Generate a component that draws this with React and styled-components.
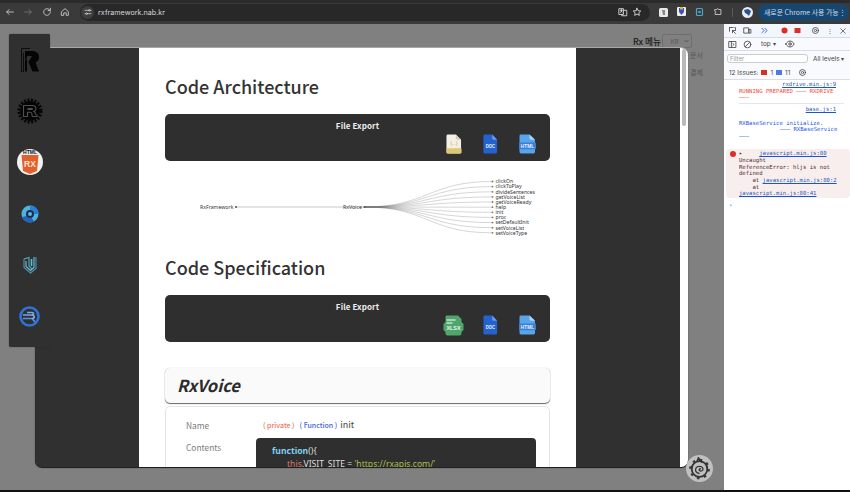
import React from "react";
import styled, { createGlobalStyle } from "styled-components";

const Global = createGlobalStyle`
  html, body { margin: 0; padding: 0; width: 850px; height: 492px; overflow: hidden; background: #000; }
  * { box-sizing: border-box; }
  body { font-family: "Noto Sans CJK KR", "Noto Sans", sans-serif; }
`;

const Shell = styled.div`
  width: 850px; height: 492px; display: flex; flex-direction: column; overflow: hidden; background: #111;
`;
const Toolbar = styled.header`
  height: 24px; flex: none; background: #3a3a3b; border-top: 3px solid #2b2b2c; display: flex; align-items: center;
  padding: 0 1px 3px 0; color: #c4c7c5;
`;
const NavGroup = styled.div`
  width: 80px; flex: none; display: flex; align-items: center; gap: 4.3px; padding-left: 3px;
`;
const NavButton = styled.span`
  width: 14px; height: 14px; display: flex; align-items: center; justify-content: center; opacity: ${p => (p.$dim ? 0.4 : 1)};
`;
const UrlBar = styled.div`
  width: 145.5px; flex: 1; height: 17px; border-radius: 9px; background: #282829; display: flex; align-items: center;
  font: 7.2px "Inter", "Liberation Sans", sans-serif; color: #d6d6d6; padding: 0 8px 0 1px; gap: 4px;
`;
const UrlTune = styled.span`
  width: 13px; height: 13px; border-radius: 50%; background: #3f3f41; display: flex; align-items: center; justify-content: center;
`;
const UrlSpacer = styled.span`flex: 1;`;
const ExtGroup = styled.div`
  flex: none; width: 108px; display: flex; align-items: center; gap: 9px; padding-left: 9px;
`;
const UpdatePill = styled.div`
  width: 91px; flex: none; height: 17px; border-radius: 9px; background: #17466f; color: #c9dff5; display: flex; align-items: center;
  justify-content: space-between; font: 6.9px "Noto Sans CJK KR", sans-serif; padding: 0 4px 0 6px; white-space: nowrap;
`;
const Body = styled.div`flex: none; height: 466px; display: flex;`;
const Page = styled.main`
  position: relative; width: 724px; flex: none; background: #808080; overflow: hidden;
`;
const PageTop = styled.div`
  position: absolute; top: 10px; left: 633px; display: flex; align-items: center; gap: 1px; font: 500 8.6px "Noto Sans CJK KR", sans-serif; color: #1a1a1a;
`;
const LangSelect = styled.div`
  width: 30px; height: 14px; border: 1px solid #6e6e6e; border-radius: 2px; display: flex; justify-content: space-between; align-items: center;
  font: 6px "Inter", sans-serif; color: #585858; padding: 0 2px 0 8px;
`;
const BehindLinks = styled.div`
  position: absolute; top: 26px; left: 690px; display: flex; flex-direction: column; gap: 7px; font: 7px/10px "Noto Sans CJK KR", sans-serif; color: #555;
`;
const SideRail = styled.nav`
  position: absolute; left: 9px; top: 10px; width: 41px; height: 313px; background: #303031; border-radius: 2px; z-index: 2;
  box-shadow: 0 0 1px #222; display: flex; flex-direction: column; align-items: center;
`;
const RailSlot = styled.div`
  height: 51.4px; flex: none; display: flex; align-items: center; justify-content: center;
`;
const Modal = styled.section`
  position: absolute; left: 35px; top: 23px; width: 653px; height: 420px; background: #303031; border-radius: 0 7px 7px 7px;
  display: flex; overflow: hidden; box-shadow: 0 1px 1px #151515; border-top: 1px solid #a8a8a8;
`;
const Gutter = styled.div`width: 104px; flex: none; background: #303031;`;
const Sheet = styled.article`
  width: 437px; flex: none; background: #fff; padding: 23px 26px 0; overflow: hidden; color: #333;
`;
const Scroll = styled.div`flex: 1; background: #fff; padding-left: 2px;`;
const ScrollThumb = styled.div`
  width: 4px; height: 77px; background: #b9b9b9; border-radius: 2px; margin-top: 1px;
`;
const Heading = styled.h1`
  margin: 0; font: 500 18px/30px "Noto Sans CJK KR", "Noto Sans", sans-serif; color: #333; height: 30px;
`;
const ExportPanel = styled.div`
  height: 47px; margin-top: 13px; background: #2f2f30; border-radius: 5px; color: #eee; padding-top: 5px;
  display: flex; flex-direction: column; align-items: center;
`;
const ExportTitle = styled.div`
  font: 700 8px/14px "Noto Sans CJK KR", sans-serif; letter-spacing: .1px;
`;
const ExportIcons = styled.div`
  align-self: flex-end; display: flex; gap: 21px; padding-right: 14px; margin-top: 1px;
`;
const XlsxIcon = styled.svg`margin-right: -2px;`;
const Tree = styled.svg`
  display: block; width: 385px; height: 70px; margin: 14px 0 7px;
`;
const TreeLabel = styled.text`
  font: 5.2px "Noto Sans", "Liberation Sans", sans-serif; fill: #333;
`;
const ClassTitle = styled.div`
  margin-top: 26px; height: 35px; background: #fafafa; border-radius: 5px; box-shadow: 0 1px 1px #666, 0 0 1px #bbb; padding-left: 12px;
  font: italic 700 16.5px/35px "Noto Sans CJK KR", sans-serif; color: #2c2c2c;
`;
const DetailCard = styled.div`
  margin-top: 3px; height: 70px; border: 1px solid #e4e4e4; border-radius: 5px 5px 0 0; padding: 11px 13px 0 20px;
  display: grid; grid-template-columns: 70px 1fr; grid-template-rows: 18px auto; row-gap: 2px;
`;
const DetailLabel = styled.div`font: 8.4px/14px "Noto Sans CJK KR", sans-serif; color: #7c7c7c; padding-top: ${p => p.$pad || 0}px;`;
const DetailValue = styled.div`
  font: 9px/14px "Noto Sans CJK KR", sans-serif; color: #444; display: flex; gap: 3px; padding-left: 7px; white-space: nowrap;
`;
const Tag = styled.span`font-size: 7px; font-weight: 500; color: ${p => p.$c}; margin-right: ${p => p.$mr || 0}px;`;
const CodeBlock = styled.pre`
  margin: 0; width: 280px; height: 60px; background: #2f2f30; border-radius: 4px; padding: 7px 16px; font: 400 8.6px/13px "Noto Sans", sans-serif; color: #ddd;
`;
const CodeIndent = styled.span`display: inline-block; width: 15px;`;
const Kw = styled.span`color: ${p => p.$c}; font-weight: ${p => p.$b || 400};`;
const CornerBadge = styled.div`
  position: absolute; left: 686px; top: 431px; width: 27px; height: 27px; border-radius: 50%; background: #c0c0c0; z-index: 3;
  display: flex; align-items: center; justify-content: center;
`;
const Strip = styled.footer`height: 2px; flex: none; background: #111;`;

const Devtools = styled.aside`
  width: 126px; flex: none; background: #fff; display: flex; flex-direction: column; font: 6.4px "Inter", "Liberation Sans", sans-serif; color: #474747;
`;
const DevTabs = styled.div`
  height: 14px; background: #f3f6fc; border-bottom: 1px solid #d5dbe8; display: flex; align-items: center; padding-left: 3.5px;
`;
const DevRow = styled.div`
  height: ${p => p.$h}px; display: flex; align-items: center; gap: ${p => p.$gap || 0}px; padding-left: ${p => p.$pad || 3.500}px; background: #f8fafd; flex: none;
  border-bottom: ${p => (p.$line ? "1px solid #d8dce6" : "0")};
`;
const DevIcon = styled.span`
  width: ${p => p.$w || 9}px; height: 10px; flex: none; display: flex; align-items: center; justify-content: center; line-height: 10px;
  margin-left: ${p => p.$ml || 0}px; color: ${p => p.$c || "inherit"};
`;
const DevLabel = styled.span`margin-left: ${p => p.$ml || 0}px; white-space: nowrap;`;
const FilterBox = styled.div`
  width: 81px; height: 9px; border: 1px solid #c8ccd3; border-radius: 3px; background: #fff; color: #999; font-size: 6px; line-height: 7px; padding-left: 2px;
`;
const Console = styled.div`
  flex: 1; background: #fff; font: 5.6px/6.7px "DejaVu Sans Mono", "Liberation Mono", monospace; color: #333; padding-top: 1px;
`;
const LogEntry = styled.div`
  margin-left: 15px; margin-right: 6px; padding-bottom: ${p => (p.$line ? 2 : 0)}px; color: ${p => p.$c || "#333"}; margin-bottom: ${p => p.$mb || 0}px;
  border-bottom: ${p => (p.$line ? "1px solid #e1e7f2" : "0")};
`;
const LogSource = styled.div`text-align: right; padding-right: 8px; color: #1a56c4; text-decoration: underline;`;
const LogIndent = styled.span`margin-left: 41px; white-space: nowrap;`;
const LogLink = styled.span`color: #1a56c4; text-decoration: underline;`;
const ErrorBox = styled.div`
  margin-left: 2px; background: #f9eeee; border-radius: 4px; padding: 1px 0 1px 13px; color: #4a2a2a; position: relative; height: 49px; white-space: pre;
`;
const ErrDot = styled.span`
  position: absolute; left: 4px; top: 2px; width: 6px; height: 6px; border-radius: 50%; background: #d93025;
`;
const Prompt = styled.div`padding: 4px 0 0 5px; color: #1a56c4; font-weight: 700;`;

const Stroke = ({ children, s = 12 }) => (
  <svg width={s} height={s} viewBox="0 0 24 24" fill="none" stroke="currentColor" strokeWidth="2.2" strokeLinecap="round" strokeLinejoin="round">{children}</svg>
);

const FileIcon = ({ body, fold, label, labelBg, w = 17, extra }) => (
  <svg width={w} height="20" viewBox="0 0 17 21" preserveAspectRatio="none">
    <path d="M2 0.5H10.5L16 6V19a1.5 1.5 0 0 1-1.5 1.5H2A1.5 1.5 0 0 1 .5 19V2A1.5 1.5 0 0 1 2 .5Z" fill={body} />
    <path d="M10.5 .5L16 6H12a1.5 1.5 0 0 1-1.5-1.5Z" fill={fold} />
    {extra}
    {labelBg && <rect x="0" y="9" width="17" height="7" rx="1" fill={labelBg} />}
    {label && <text x="8.5" y="14.6" textAnchor="middle" fontSize="4.8" fontWeight="700" fill="#e6f0ff" fontFamily="Liberation Sans, sans-serif">{label}</text>}
  </svg>
);

const leaves = [
  ["clickOn", 181.5], ["clickToPlay", 186.6], ["divideSentences", 191.8], ["getVoiceList", 196.9], ["getVoiceReady", 202], ["help", 207.2],
  ["init", 212.3], ["proc", 217.4], ["setDefaultInit", 222.6], ["setVoiceList", 227.7], ["setVoiceType", 232.8],
];

const TreeChart = () => (
  <Tree viewBox="0 0 385 70">
    <g transform="translate(-165 -175)">
      <path d="M236 207H364" stroke="#bbb" strokeWidth=".8" fill="none" />
      {leaves.map(([n, y]) => (
        <path key={n} d={`M364 207C428 207 428 ${y} 492 ${y}`} stroke="#555" strokeOpacity=".3" strokeWidth=".8" fill="none" />
      ))}
      <circle cx="236" cy="207" r="1.1" fill="#555" />
      <circle cx="364.5" cy="207" r="1.1" fill="#555" />
      <TreeLabel x="200" y="209">RxFramework</TreeLabel>
      <TreeLabel x="343" y="209">RxVoice</TreeLabel>
      {leaves.map(([n, y]) => (
        <g key={n}>
          <circle cx="492.5" cy={y} r=".9" fill="#777" />
          <TreeLabel x="495.5" y={y + 1.8}>{n}</TreeLabel>
        </g>
      ))}
    </g>
  </Tree>
);

const ArchIcons = () => (
  <ExportIcons>
    <FileIcon w={16} body="#f4f0e6" fold="#d8cfae" extra={<>
      <rect x=".5" y="15" width="16" height="5.5" rx="1" fill="#e0c76e" />
      <text x="8.5" y="12" textAnchor="middle" fontSize="5" fill="#c9a050" fontFamily="Liberation Sans, sans-serif">{"{...}"}</text>
    </>} />
    <FileIcon w={15} body="#2463cf" fold="#6f9be4" label="DOC" />
    <FileIcon body="#57a5ea" fold="#a9d3f6" label="HTML" labelBg="#3f7fd0" />
  </ExportIcons>
);
const SpecIcons = () => (
  <ExportIcons>
    <XlsxIcon width="21" height="21" viewBox="0 0 21 21">
      <path d="M3 .5H15L18.5 4V7L20.5 9V15L18.5 17V18.5A2 2 0 0 1 16.5 20.5H4.5A2 2 0 0 1 2.500 18.5V17L.5 15V9L2.500 7V2Z" fill="#4fa56b" />
      <rect x="3.500" y="4" width="9" height="2" fill="#a7d5b4" /><rect x="3.500" y="7" width="6" height="2" fill="#a7d5b4" />
      <text x="10.500" y="15" textAnchor="middle" fontSize="5.400" fontWeight="700" fill="#eaf6ee" fontFamily="Liberation Sans, sans-serif">XLSX</text>
    </XlsxIcon>
    <FileIcon w={15} body="#2463cf" fold="#6f9be4" label="DOC" />
    <FileIcon body="#57a5ea" fold="#a9d3f6" label="HTML" labelBg="#3f7fd0" />
  </ExportIcons>
);

const RxMark = () => (
  <svg width="18" height="24" viewBox="0 0 18 24">
    <path d="M.5 .5H9" stroke="#050505" strokeWidth=".8" fill="none" />
    <path d="M.5 .5V23.500H2.500V5" stroke="#050505" strokeWidth=".8" fill="none" />
    <path d="M4 3H11C15.500 3 18 5.500 18 9C18 11.800 16.500 13.500 14.500 14.500L18 23.500H11.500L7.500 14L11 8H6V23.500H4Z" fill="#050505" />
    <path d="M7 8L3 14" stroke="#303031" strokeWidth=".6" />
  </svg>
);
const RustMark = () => (
  <svg width="26" height="26" viewBox="0 0 26 26">
    <circle cx="13" cy="13" r="11" fill="none" stroke="#050505" strokeWidth="3" strokeDasharray="2 1.500" />
    <circle cx="13" cy="13" r="10" fill="#050505" />
    <path d="M6.500 18.500V7.500H15.500C17.500 7.500 19 8.800 19 10.700C19 12.300 18 13.100 17 13.400C18 13.900 18.300 15 18.500 16C18.600 17 19.500 17 20 17V18.500H15.500C15 18 15 16.500 14.800 15.500C14.600 14.600 14 14.300 13 14.300H10.500V18.500Z" fill="none" stroke="#505050" strokeWidth="1.100" />
    <path d="M10.500 10H15C16.300 10 16.300 12 15 12H10.500Z" fill="#505050" />
  </svg>
);
const HtmlRx = () => (
  <svg width="26" height="26" viewBox="0 0 26 26">
    <circle cx="13" cy="13" r="13" fill="#f2f2f2" />
    <text x="13" y="4.800" textAnchor="middle" fontSize="5" fontWeight="700" fill="#111" fontFamily="Liberation Sans, sans-serif">HTML</text>
    <path d="M4.500 6H21.500L20 22L13 25L6 22Z" fill="#e2602c" />
    <text x="13" y="18" textAnchor="middle" fontSize="8.500" fontWeight="700" fill="#fbe6dc" fontFamily="Liberation Sans, sans-serif">RX</text>
  </svg>
);
const OrbMark = () => (
  <svg width="18" height="18" viewBox="0 0 18 18">
    <circle cx="9" cy="9" r="8.500" fill="#4fb4dd" />
    <path d="M9 .5A8.500 8.500 0 0 1 17.500 9H13A4 4 0 0 0 9 5Z" fill="#2a7fd6" />
    <path d="M1 12A8.500 8.500 0 0 0 13 16.500L10.500 12.500A4 4 0 0 1 5.500 11Z" fill="#2563b8" />
    <circle cx="9" cy="9" r="4" fill="#1b2e4d" /><circle cx="9" cy="9" r="2" fill="#67b2e0" />
  </svg>
);
const ShieldMark = () => (
  <svg width="14" height="18" viewBox="0 0 14 18" fill="none" strokeWidth="1.100">
    <path d="M1 3L6 1.500V10L9 13" stroke="#5fa9bb" />
    <path d="M1 3V11.500L7.500 17L13 12.500V1" stroke="#4f97ab" />
    <path d="M3 5V10.500L7.500 14.500L11 11.500V1" stroke="#6cc8dc" />
    <path d="M8.500 3V10" stroke="#4cc6e0" strokeWidth="1.600" />
  </svg>
);
const RxCircle = () => (
  <svg width="21" height="21" viewBox="0 0 21 21">
    <circle cx="10.500" cy="10.500" r="9" fill="none" stroke="#2f72d8" strokeWidth="2.600" />
    <path d="M4 9H13C15 9 15 6.500 13 6.500H8" stroke="#7aa6e8" strokeWidth="1.700" fill="none" />
    <path d="M4 12.500H13L16 16" stroke="#5b90e2" strokeWidth="1.700" fill="none" />
    <path d="M13 12.500C16 12.500 16 9 13 9" stroke="#7aa6e8" strokeWidth="1.700" fill="none" />
  </svg>
);
const DragonGear = () => (
  <svg width="23" height="23" viewBox="0 0 23 23" fill="none">
    <circle cx="11.500" cy="12" r="7.800" stroke="#333" strokeWidth="1.800" />
    <circle cx="11.500" cy="12" r="9.300" stroke="#333" strokeWidth="2" strokeDasharray="2.500 4.800" />
    <path d="M11.500 16.500C8 16.500 6.800 13.500 8 11C9.200 8.700 13.500 8.700 14.800 11C15.800 13.500 12.800 15 11.300 13.300C10.700 12.200 12 11.300 12.800 12.200" stroke="#333" strokeWidth="1.300" />
    <path d="M9 4.500L10.500 1L12 3.500L14.500 5.500" stroke="#333" strokeWidth="1.700" />
  </svg>
);
const Gear = () => (
  <Stroke s={9}><circle cx="12" cy="12" r="3" /><circle cx="12" cy="12" r="8" /></Stroke>
);

export default function App() {
  return (
    <Shell>
      <Global />
      <Toolbar>
        <NavGroup>
          <NavButton><Stroke s={10}><path d="M20 12H4M10 6l-6 6 6 6" /></Stroke></NavButton>
          <NavButton $dim><Stroke s={10}><path d="M4 12h16M14 6l6 6-6 6" /></Stroke></NavButton>
          <NavButton><Stroke s={10}><path d="M20 12a8 8 0 1 1-2.500-5.800L20 8.500M20 3v5.500h-5.500" /></Stroke></NavButton>
          <NavButton><Stroke s={10}><path d="M4 11l8-7 8 7v9h-5v-6H9v6H4Z" /></Stroke></NavButton>
        </NavGroup>
        <UrlBar>
          <UrlTune><Stroke s={8}><path d="M3 7h10M19 7h2M3 17h2M11 17h10" /><circle cx="16" cy="7" r="2.500" /><circle cx="8" cy="17" r="2.500" /></Stroke></UrlTune>
          rxframework.nab.kr
          <UrlSpacer />
          <Stroke s={10}><path d="M3 4h10v14H3zM13 8h8v13H9v-3M6 8h4M8 6v2M6 13c2-1 3-3 3-5M7 9c0 2 2 3 3 4" /></Stroke>
          <Stroke s={10}><path d="M12 3l2.700 5.800 6.300.8-4.600 4.300 1.200 6.200L12 17l-5.600 3.100 1.200-6.200L3 9.600l6.300-.8Z" /></Stroke>
        </UrlBar>
        <ExtGroup>
          <svg width="9" height="9" viewBox="0 0 9 9"><rect width="9" height="9" rx="1.500" fill="#e8e8e8" /><path d="M3 2h3v5H4Z" fill="#888" /></svg>
          <svg width="9" height="10" viewBox="0 0 9 10"><rect width="9" height="9" rx="1" fill="#f2efe2" /><path d="M2 1h5v4L4.500 8 2 5Z" fill="#2f56c4" /><rect x="3" y="0" width="3" height="2.500" fill="#e0b52c" /></svg>
          <svg width="9" height="10" viewBox="0 0 9 10" fill="none"><rect x="1.500" y="1.500" width="6" height="7" rx="1" stroke="#4ea6c4" strokeWidth="1.200" /><circle cx="4.500" cy="5" r="1.300" fill="#4ea6c4" /></svg>
          <Stroke s={10}><path d="M5 6h4a2 2 0 0 1 4 0h6v12H5v-4a2 2 0 0 0 0-4Z" /></Stroke>
          <svg width="1" height="9"><rect width="1" height="9" fill="#5a5a5a" /></svg>
          <svg width="11" height="11" viewBox="0 0 11 11"><circle cx="5.500" cy="5.500" r="5.500" fill="#e8eef8" /><path d="M2 3L6 2 9 4 7 9 5 7 3 6Z" fill="#2a4f96" /></svg>
        </ExtGroup>
        <UpdatePill>새로운 Chrome 사용 가능<span>⋮</span></UpdatePill>
      </Toolbar>
      <Body>
        <Page>
          <PageTop>Rx 메뉴<LangSelect>KR<svg width="5" height="4" viewBox="0 0 5 4" fill="none"><path d="M.5 1L2.500 3 4.500 1" stroke="#555" /></svg></LangSelect></PageTop>
          <BehindLinks><span>문서</span><span>결제</span></BehindLinks>
          <SideRail>
            <RailSlot><RxMark /></RailSlot>
            <RailSlot><RustMark /></RailSlot>
            <RailSlot><HtmlRx /></RailSlot>
            <RailSlot><OrbMark /></RailSlot>
            <RailSlot><ShieldMark /></RailSlot>
            <RailSlot><RxCircle /></RailSlot>
          </SideRail>
          <Modal>
            <Gutter />
            <Sheet>
              <Heading>Code Architecture</Heading>
              <ExportPanel><ExportTitle>File Export</ExportTitle><ArchIcons /></ExportPanel>
              <TreeChart />
              <Heading>Code Specification</Heading>
              <ExportPanel><ExportTitle>File Export</ExportTitle><SpecIcons /></ExportPanel>
              <ClassTitle>RxVoice</ClassTitle>
              <DetailCard>
                <DetailLabel>Name</DetailLabel>
                <DetailValue>
                  <Tag $c="#f2735f" $mr={2}>( private )</Tag><Tag $c="#3f62e8">( Function )</Tag>init
                </DetailValue>
                <DetailLabel $pad={2}>Contents</DetailLabel>
                <CodeBlock>
                  <Kw $c="#7fd0f0" $b={700}>function</Kw>(){"{"}{"\n"}
                  <CodeIndent /><Kw $c="#d9776a">this</Kw>.VISIT_SITE = <Kw $c="#a8c04a">'https://rxapis.com/'</Kw>
                </CodeBlock>
              </DetailCard>
            </Sheet>
            <Gutter />
            <Scroll><ScrollThumb /></Scroll>
          </Modal>
          <CornerBadge><DragonGear /></CornerBadge>
        </Page>
        <Devtools>
          <DevTabs>
            <DevIcon><Stroke s={9}><path d="M4 4h10M4 4v10M20 12V4h-2M12 12l8 8M12 12v6M12 12h6" /></Stroke></DevIcon>
            <DevIcon $ml={6}><Stroke s={9}><path d="M3 5h12v14H3zM17 9h4v10h-4z" /></Stroke></DevIcon>
            <DevIcon $ml={8} $c="#1a56c4"><Stroke s={9}><path d="M5 6l6 6-6 6M13 6l6 6-6 6" /></Stroke></DevIcon>
            <DevIcon $ml={11}><svg width="7" height="7"><circle cx="3.500" cy="3.500" r="3" fill="#d93025" /></svg></DevIcon>
            <DevIcon $ml={4}><svg width="7" height="7"><rect x=".5" y="1" width="6" height="5" fill="#d93025" /></svg></DevIcon>
            <DevIcon $ml={9}><Gear /></DevIcon>
            <DevIcon $ml={6}>⋮</DevIcon>
            <DevIcon $ml={4}><Stroke s={8}><path d="M5 5l14 14M19 5L5 19" /></Stroke></DevIcon>
          </DevTabs>
          <DevRow $h={13} $line>
            <DevIcon><Stroke s={9}><path d="M3 4h18v16H3zM9 4v16M13 9l3 3-3 3" /></Stroke></DevIcon>
            <DevIcon $ml={6}><Stroke s={9}><circle cx="12" cy="12" r="9" /><path d="M6 18L18 6" /></Stroke></DevIcon>
            <DevLabel $ml={9.500}>top ▾</DevLabel>
            <DevIcon $ml={9} $w={10}><Stroke s={10}><path d="M2 12c3-5 6-7 10-7s7 2 10 7c-3 5-6 7-10 7s-7-2-10-7Z" /><circle cx="12" cy="12" r="3" /></Stroke></DevIcon>
          </DevRow>
          <DevRow $h={15} $gap={5} $pad={3}><FilterBox>Filter</FilterBox><DevLabel>All levels ▾</DevLabel></DevRow>
          <DevRow $h={14} $gap={3} $pad={5} $line>
            12 Issues:
            <svg width="6" height="6"><rect width="6" height="5" fill="#d93025" /></svg>1
            <svg width="6" height="6"><rect width="6" height="5" fill="#4d78e8" /></svg>11
            <DevIcon $ml={5}><Gear /></DevIcon>
          </DevRow>
          <Console>
            <LogEntry $c="#f0483e" $line $mb={2}>
              <LogSource>rxdrive.min.js:9</LogSource>
              RUNNING PREPARED ——— RXDRIVE<br />———
            </LogEntry>
            <LogEntry $c="#2456e0" $mb={9.500}>
              <LogSource>base.js:1</LogSource>
              <br />RXBaseService initialize.<br />
              <LogIndent>——— RXBaseService</LogIndent><br />———
            </LogEntry>
            <ErrorBox>
              <ErrDot />▸     <LogLink>javascript.min.js:80</LogLink>{"\n"}Uncaught{"\n"}ReferenceError: hljs is not{"\n"}defined{"\n"}    at <LogLink>javascript.min.js:80:2</LogLink>{"\n"}    at{"\n"}<LogLink>javascript.min.js:80:41</LogLink>
            </ErrorBox>
            <Prompt>›</Prompt>
          </Console>
        </Devtools>
      </Body>
      <Strip />
    </Shell>
  );
}
